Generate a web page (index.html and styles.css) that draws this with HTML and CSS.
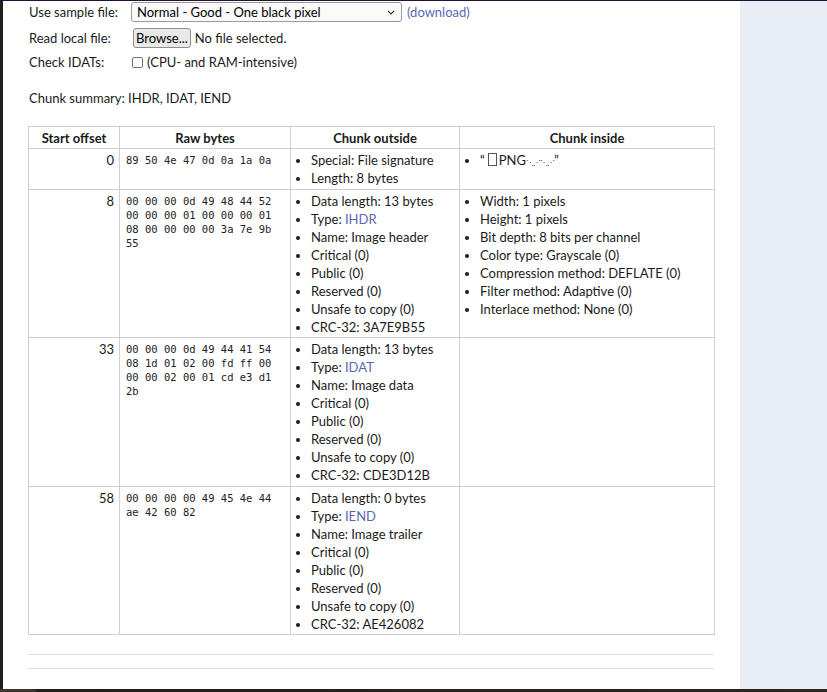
FILE: index.html
```html
<!DOCTYPE html>
<html>
<head>
<meta charset="utf-8">
<link rel="stylesheet" href="styles.css">
</head>
<body>
<div class="topline"></div>
<div class="frame">
  <div class="leftstrip"></div>
  <main class="main">
    <div class="form">
      <div class="frow r1">
        <span class="lbl">Use sample file:</span>
        <div class="ctl">
          <div class="select"><span>Normal - Good - One black pixel</span>
            <svg class="chev" width="8" height="5" viewBox="0 0 8 5"><path d="M1 1 L4 4 L7 1" fill="none" stroke="#333" stroke-width="1.2"/></svg>
          </div>
          <a class="link dl" href="#">(download)</a>
        </div>
      </div>
      <div class="frow r2">
        <span class="lbl">Read local file:</span>
        <div class="ctl"><button class="browse">Browse...</button><span class="nofile">No file selected.</span></div>
      </div>
      <div class="frow r3">
        <span class="lbl">Check IDATs:</span>
        <div class="ctl"><span class="cbox"></span><span>(CPU- and RAM-intensive)</span></div>
      </div>
    </div>
    <p class="summary">Chunk summary: IHDR, IDAT, IEND</p>
    <table class="chunks">
      <colgroup><col class="c1"><col class="c2"><col class="c3"><col class="c4"></colgroup>
      <thead>
        <tr><th>Start offset</th><th>Raw bytes</th><th>Chunk outside</th><th>Chunk inside</th></tr>
      </thead>
      <tbody>
        <tr>
          <td class="off">0</td>
          <td class="raw">89 50 4e 47 0d 0a 1a 0a</td>
          <td><ul><li>Special: File signature</li><li>Length: 8 bytes</li></ul></td>
          <td><ul><li>“<span class="tofu"></span>PNG<span class="ctrl">⋱⋰⋱⋰</span>”</li></ul></td>
        </tr>
        <tr>
          <td class="off">8</td>
          <td class="raw">00 00 00 0d 49 48 44 52 00 00 00 01 00 00 00 01 08 00 00 00 00 3a 7e 9b 55</td>
          <td><ul><li>Data length: 13 bytes</li><li>Type: <a class="link" href="#">IHDR</a></li><li>Name: Image header</li><li>Critical (0)</li><li>Public (0)</li><li>Reserved (0)</li><li>Unsafe to copy (0)</li><li>CRC-32: 3A7E9B55</li></ul></td>
          <td><ul><li>Width: 1 pixels</li><li>Height: 1 pixels</li><li>Bit depth: 8 bits per channel</li><li>Color type: Grayscale (0)</li><li>Compression method: DEFLATE (0)</li><li>Filter method: Adaptive (0)</li><li>Interlace method: None (0)</li></ul></td>
        </tr>
        <tr>
          <td class="off">33</td>
          <td class="raw">00 00 00 0d 49 44 41 54 08 1d 01 02 00 fd ff 00 00 00 02 00 01 cd e3 d1 2b</td>
          <td><ul><li>Data length: 13 bytes</li><li>Type: <a class="link" href="#">IDAT</a></li><li>Name: Image data</li><li>Critical (0)</li><li>Public (0)</li><li>Reserved (0)</li><li>Unsafe to copy (0)</li><li>CRC-32: CDE3D12B</li></ul></td>
          <td></td>
        </tr>
        <tr>
          <td class="off">58</td>
          <td class="raw">00 00 00 00 49 45 4e 44 ae 42 60 82</td>
          <td><ul><li>Data length: 0 bytes</li><li>Type: <a class="link" href="#">IEND</a></li><li>Name: Image trailer</li><li>Critical (0)</li><li>Public (0)</li><li>Reserved (0)</li><li>Unsafe to copy (0)</li><li>CRC-32: AE426082</li></ul></td>
          <td></td>
        </tr>
      </tbody>
    </table>
    <hr class="rule first">
    <hr class="rule">
  </main>
  <aside class="side"></aside>
</div>
<div class="bottomstrip"></div>
</body>
</html>
```
FILE: styles.css
```css
html, body {
  margin: 0;
  padding: 0;
}
body {
  width: 827px;
  height: 692px;
  overflow: hidden;
  background: #1f1f1f;
  font-family: Lato, "Noto Sans", sans-serif;
  font-size: 13px;
  color: #1a1a1a;
}
.topline {
  height: 1px;
  background: #22103f;
}
.frame {
  display: flex;
  height: 688px;
}
.leftstrip {
  width: 3px;
  background: #1f1f1f;
}
.main {
  width: 737px;
  background: #fff;
  padding: 0 26px 0 25px;
  box-sizing: border-box;
}
.side {
  flex: 1;
  background: #e9edf6;
}
.bottomstrip {
  height: 3px;
  background: linear-gradient(90deg, #3d342d 0, #3d342d 36px, #211e1c 36px, #2a2723 100%);
}
.form {
  padding-left: 1px;
}
.frow {
  display: flex;
  align-items: center;
}
.r1 { height: 22px; }
.r2 { height: 27px; margin-top: 1px; }
.r3 { height: 22px; }
.lbl {
  width: 102px;
  flex: none;
}
.ctl {
  display: flex;
  align-items: center;
}
.select {
  width: 271px;
  height: 20px;
  box-sizing: border-box;
  border: 1px solid #9a9a9a;
  border-radius: 3px;
  background: #fafafa;
  display: flex;
  align-items: center;
  justify-content: space-between;
  padding: 0 6px 0 5px;
  color: #000;
}
.chev { flex: none; }
.link {
  color: #5b67b5;
  text-decoration: none;
}
.dl { margin-left: 5px; }
.browse {
  margin: 0 0 0 2px;
  height: 20px;
  padding: 0 2px;
  font-family: inherit;
  font-size: 13px;
  color: #000;
  background: #e9e9e9;
  border: 1px solid #8f8f8f;
  border-radius: 3px;
}
.nofile { margin-left: 4px; }
.cbox {
  width: 9px;
  height: 9px;
  border: 1px solid #767676;
  border-radius: 2px;
  margin: 0 4px 0 1px;
  background: #fff;
}
.summary {
  margin: 16px 0 0 1px;
  line-height: 18px;
}
.chunks {
  margin-top: 19px;
  width: 686px;
  border-collapse: collapse;
  table-layout: fixed;
}
.c1 { width: 91px; }
.c2 { width: 171px; }
.c3 { width: 169px; }
.c4 { width: 255px; }
.chunks th, .chunks td {
  border: 1px solid #cfcfcf;
  vertical-align: top;
  line-height: 18px;
}
.chunks th {
  font-weight: 700;
  text-align: center;
  padding: 2px 4px 1px;
}
.chunks td {
  padding: 2px 6px 1.5px;
}
.chunks td.off {
  text-align: right;
  padding-right: 5px;
}
.chunks td.raw {
  font-family: "DejaVu Sans Mono", monospace;
  font-size: 10.5px;
  line-height: 14px;
  padding-top: 4px;
  color: #222;
}
.chunks ul {
  margin: 0;
  padding-left: 14px;
}
.tofu {
  display: inline-block;
  width: 7px;
  height: 11px;
  border: 1px solid #555;
  margin: 0 2px 0 3px;
  vertical-align: -1px;
}
.ctrl {
  font-size: 8px;
  letter-spacing: -1px;
  color: #333;
}
.rule {
  border: 0;
  height: 1px;
  background: #dedede;
  margin: 0;
  width: 686px;
}
.rule.first { margin-top: 19px; }
.rule.first + .rule { margin-top: 13px; }
```
